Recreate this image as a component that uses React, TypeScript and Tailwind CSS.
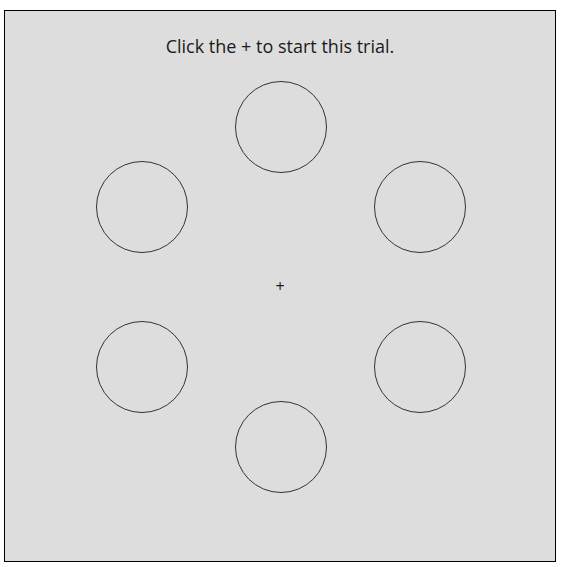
const circles = [
  { cx: 276, cy: 116 },
  { cx: 137, cy: 196 },
  { cx: 415, cy: 196 },
  { cx: 137, cy: 356 },
  { cx: 415, cy: 356 },
  { cx: 276, cy: 436 },
];

export default function App() {
  return (
    <div className="pt-[10px] pl-[4px] font-['Open_Sans',sans-serif] text-[#1a1a1a]">
      <div className="relative w-[552px] h-[552px] border border-black bg-[#dddddd]">
        <p className="pt-[23px] text-center text-[18px] leading-[24px]">Click the + to start this trial.</p>
        <svg className="absolute inset-0" width="550" height="550" viewBox="0 0 550 550">
          {circles.map((c, i) => (
            <circle key={i} cx={c.cx} cy={c.cy} r={45.5} fill="none" stroke="#333" strokeWidth={1} />
          ))}
        </svg>
        <button className="absolute left-[269px] top-[263px] w-[12px] h-[24px] text-[16px] leading-[24px] text-center cursor-pointer">
          +
        </button>
      </div>
    </div>
  );
}
